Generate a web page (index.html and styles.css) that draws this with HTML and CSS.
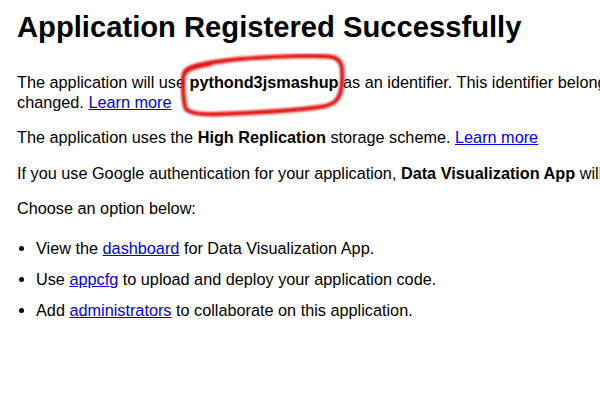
FILE: index.html
```html
<!DOCTYPE html>
<html>
<head>
<meta charset="utf-8">
<link rel="stylesheet" href="styles.css">
</head>
<body>
<div class="page">
  <h1 class="title">Application Registered Successfully</h1>
  <p class="para first">The application will use <b class="appid">pythond3jsmashup<svg class="mark" width="166" height="66" viewBox="0 0 166 66"><defs><filter id="blur" x="-10%" y="-20%" width="120%" height="140%"><feGaussianBlur stdDeviation="1.2"/></filter></defs><path d="M4 20 C6 14 20 10 60 6 C100 3 140 2 152 4 C162 6 163 14 162 30 C161 45 156 52 140 54 C110 58 70 60 40 61 C20 62 10 60 6 56 C3 50 3 36 3 26 C3 18 10 14 30 11" fill="none" stroke="#e31414" stroke-width="4.4" stroke-linecap="round" filter="url(#blur)"/></svg></b> as an identifier. This identifier belongs to your application and cannot be<br>changed. <a href="#">Learn more</a></p>
  <p class="para">The application uses the <b>High Replication</b> storage scheme. <a href="#">Learn more</a></p>
  <p class="para">If you use Google authentication for your application, <b>Data Visualization App</b> will be displayed on the sign in page.</p>
  <p class="para">Choose an option below:</p>
  <ul class="options">
    <li>View the <a href="#">dashboard</a> for Data Visualization App.</li>
    <li>Use <a href="#">appcfg</a> to upload and deploy your application code.</li>
    <li>Add <a href="#">administrators</a> to collaborate on this application.</li>
  </ul>
</div>
</body>
</html>
```
FILE: styles.css
```css
html, body {
  margin: 0;
  padding: 0;
  background: #fff;
}
html {
  overflow: hidden;
}
body {
  width: 600px;
  height: 400px;
  overflow: hidden;
  font-family: "Liberation Sans", Arial, sans-serif;
  font-size: 16.25px;
  color: #000;
}
.page {
  padding-left: 17px;
}
.title {
  font-size: 29.2px;
  font-weight: bold;
  margin: 11px 0 0 0;
  line-height: 33px;
  white-space: nowrap;
}
.para {
  line-height: 19.5px;
  margin: 16px 0 0 0;
  white-space: nowrap;
}
.first {
  margin-top: 29px;
}
.appid {
  position: relative;
}
.mark {
  position: absolute;
  left: -10px;
  top: -20px;
  pointer-events: none;
}
a {
  color: #0000ee;
  text-decoration: underline;
}
.options {
  margin: 20px 0 0 0;
  padding-left: 19px;
  line-height: 19px;
}
.options li {
  margin-bottom: 12px;
}
```
